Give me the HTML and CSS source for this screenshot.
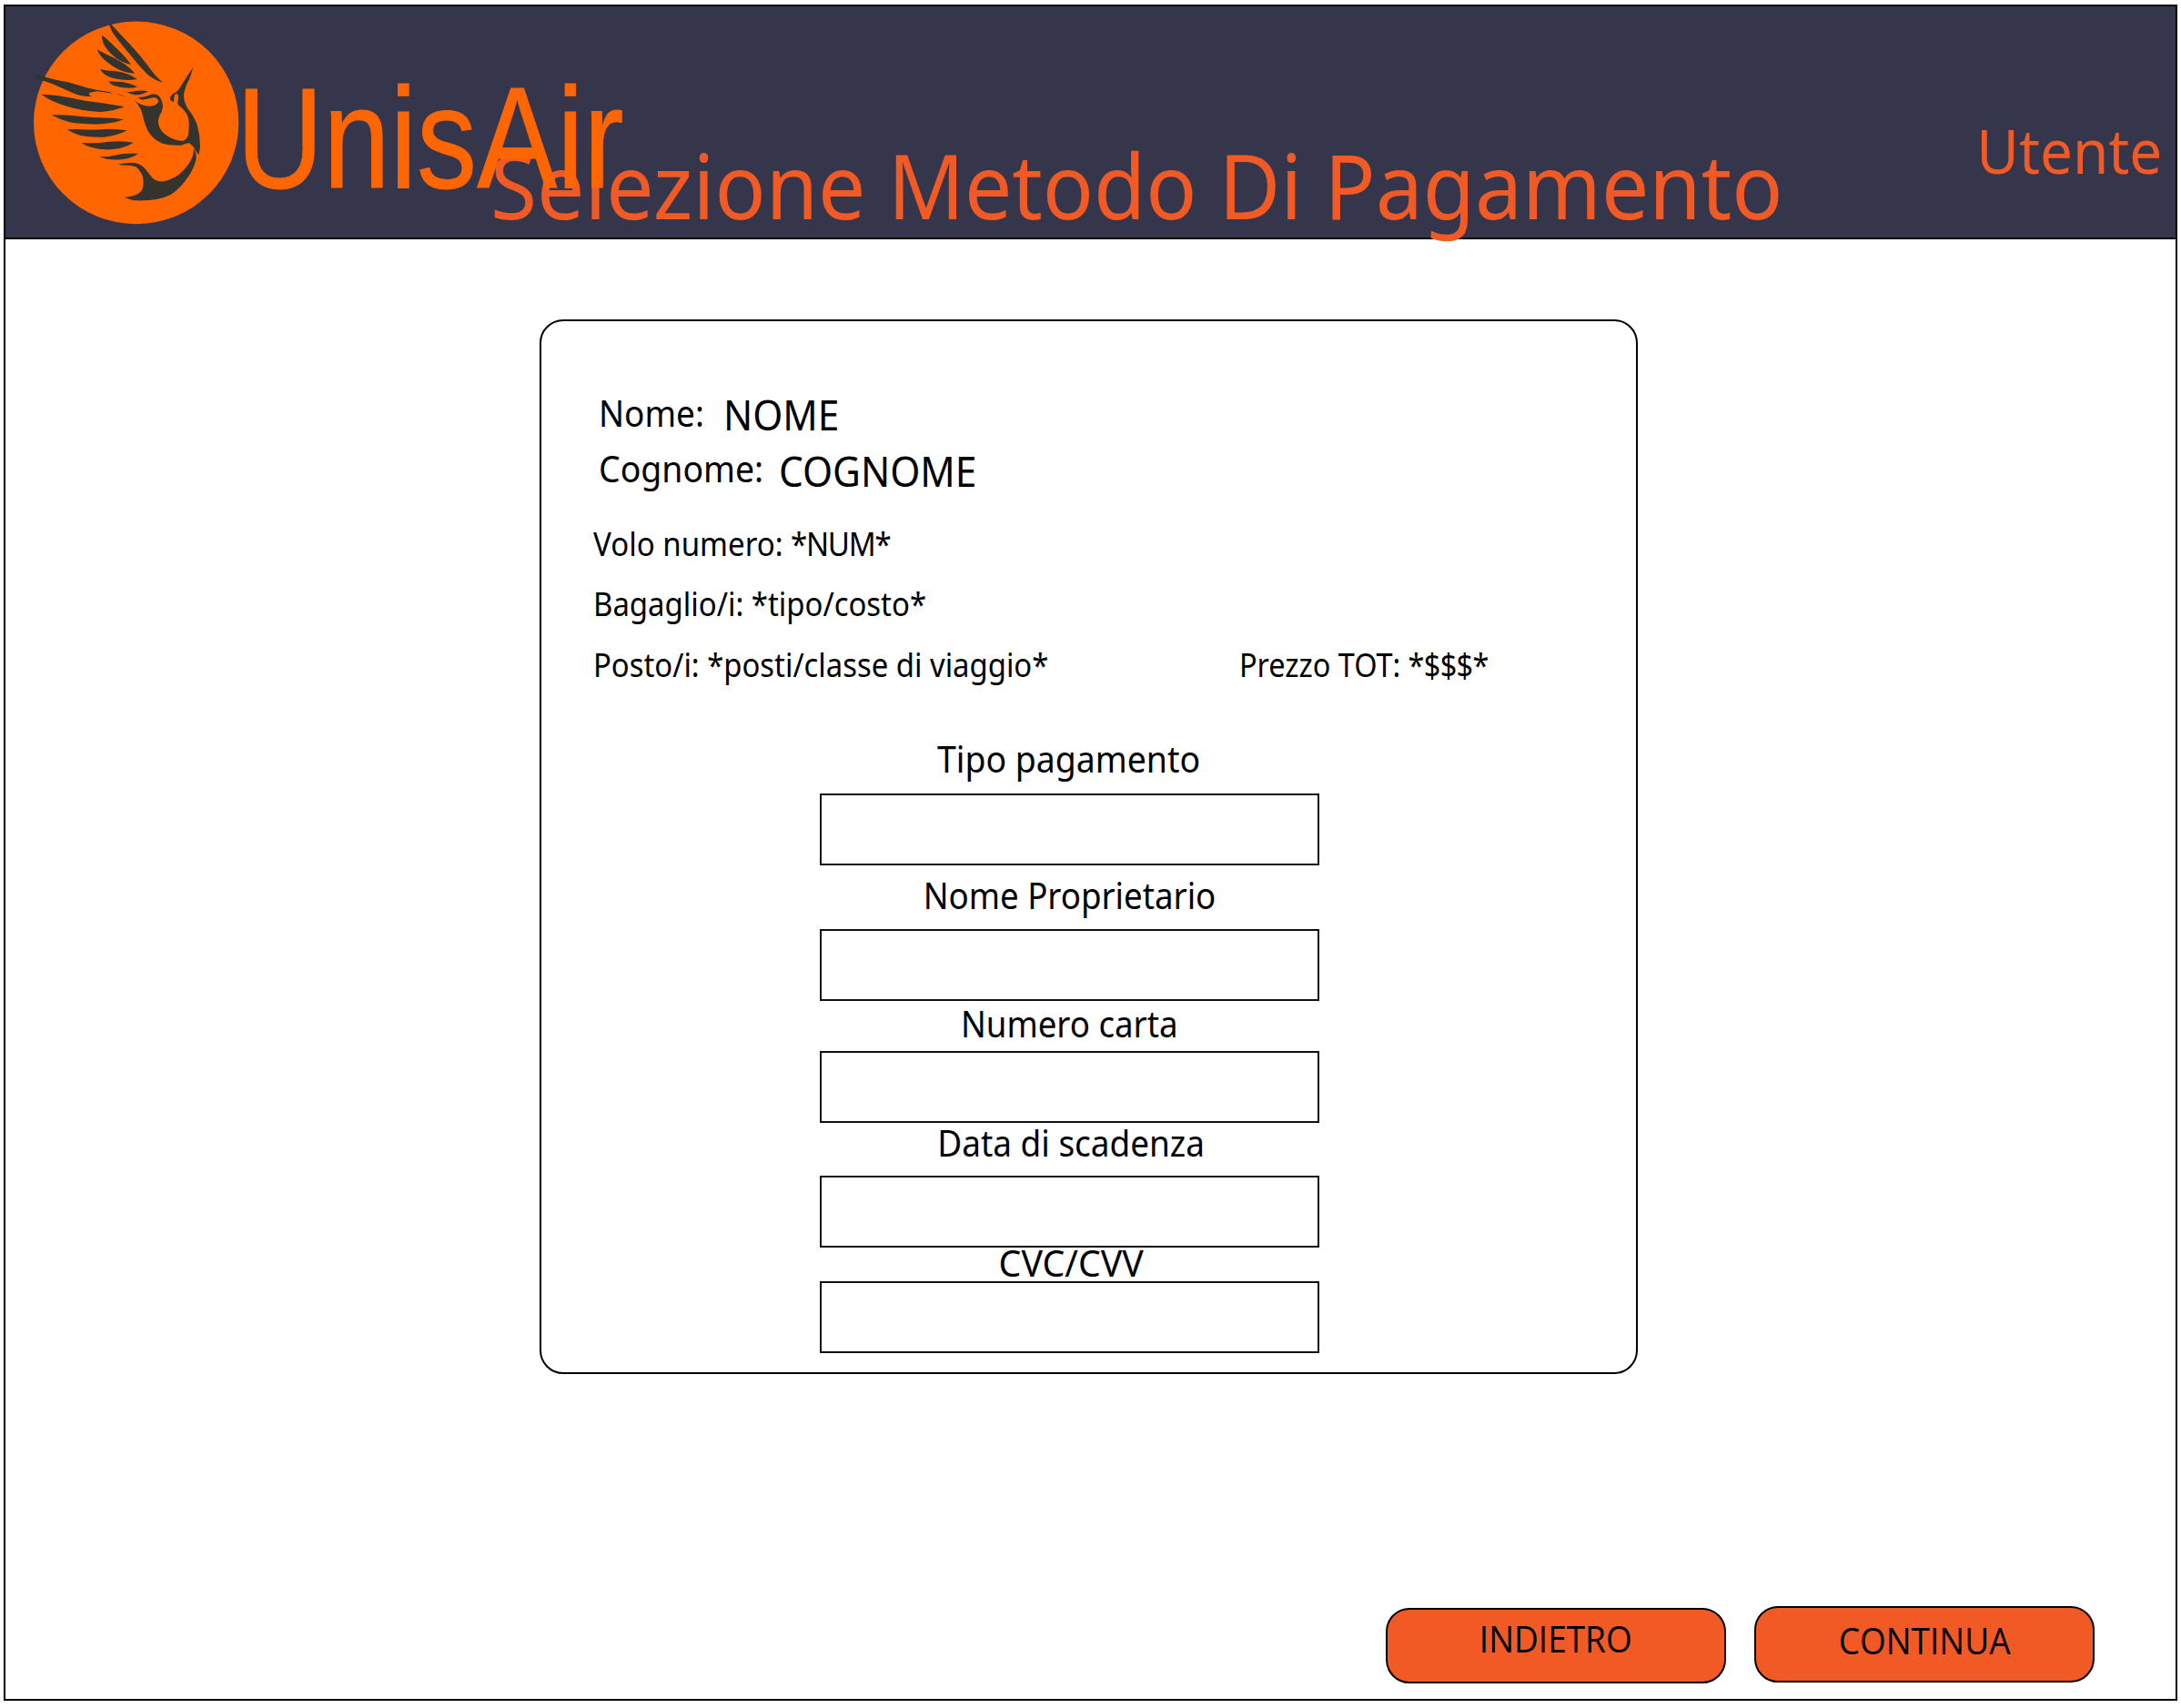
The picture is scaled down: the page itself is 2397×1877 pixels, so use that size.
FILE: index.html
```html
<!DOCTYPE html>
<html lang="it">
<head>
<meta charset="utf-8">
<title>UnisAir - Selezione Metodo Di Pagamento</title>
<link rel="stylesheet" href="styles.css">
</head>
<body>
<div class="frame">
  <header class="header">
    <svg class="logo" viewBox="105 60 690 690" aria-hidden="true">
      <ellipse cx="449" cy="404.500" rx="338" ry="334" fill="#ff6600"/>
      <g fill="#35332d">
        <path d="M357 71 L373 87 L398 114 L430 148 L462 184 L487 216 L510 246 L537 273 Q508 263 486 245 Q455 215 427 178 Q395 140 373 110 Q363 93 357 71Z"/>
        <path d="M336 117 Q347 122 360 136 Q385 160 406 181 Q420 196 432 213 Q404 208 380 190 Q350 164 341 143 Q335 130 336 117Z"/>
        <path d="M320 163 Q330 169 347 177 Q380 192 408 209 Q430 224 445 242 Q415 241 390 229 Q353 209 334 187 Q324 176 320 163Z"/>
        <path d="M329 228 Q350 234 377 234 Q400 236 424 245 Q440 252 452 261 Q425 266 394 262 Q360 257 342 243Z"/>
        <path d="M357 268 Q380 270 402 270 Q432 275 454 287 Q430 292 405 289 Q376 285 366 277Z"/>
        <path d="M416 302 Q432 304 446 300 Q466 297 489 301 Q475 310 456 313 Q434 313 416 302Z"/>
        <path d="M113 246 Q135 247 155 256 Q190 266 224 271 Q258 281 290 290 Q322 298 360 303 L374 308 L352 305 L320 301 L296 305 L293 312 L303 318 Q270 319 246 309 Q205 290 170 275 Q145 266 130 263 Q120 257 113 246Z"/>
        <path d="M378 308 Q400 311 417 319 Q397 314 378 308Z"/>
        <path d="M136 311 Q167 312 193 316 Q240 324 280 332 Q350 340 410 352 Q378 366 331 369 Q270 366 220 350 Q171 336 136 311Z"/>
        <path d="M169 379 Q210 378 240 381 Q290 387 330 388 Q370 388 407 393 Q380 406 334 409 Q270 410 230 403 Q198 395 169 379Z"/>
        <path d="M221 427 L260 426 Q300 429 340 426 Q380 424 419 430 Q387 447 345 452 Q300 454 266 447 Q240 440 221 427Z"/>
        <path d="M270 471 Q320 473 360 467 Q400 464 440 470 Q416 486 375 492 Q335 496 303 486 Q282 481 270 471Z"/>
        <path d="M326 516 Q352 518 377 512 Q412 504 456 506 Q437 521 405 525 Q360 531 326 516Z"/>
        <path d="M453 321 Q478 321 496 312 Q516 306 526 319 Q536 333 537 352 Q534 370 526 382 Q518 400 525 417 Q532 437 555 450 Q580 465 605 464 Q622 457 622 432 Q627 400 616 376 Q607 362 594 351 Q584 345 586 335 Q590 321 588 314 Q584 306 577 311 Q573 318 573 337 Q559 331 561 321 Q566 309 582 303 Q591 294 599 280 Q618 248 637 222 Q631 244 623 264 Q608 289 606 316 Q607 338 618 356 Q640 384 650 411 Q660 447 660 484 L655 511 L648 502 Q641 484 624 472 Q610 473 598 479 Q563 481 536 473 Q503 460 486 428 Q475 405 469 374 Q463 350 443 332 Q468 350 496 350 Q519 348 523 334 Q520 323 508 321 Q482 327 468 329Z"/>
        <path d="M639 490 Q647 500 647 522 Q641 554 621 582 Q596 620 563 642 Q522 661 469 661 Q440 664 409 651 Q450 647 466 630 Q476 614 471 583 Q463 562 448 550 Q425 543 405 545 L389 542 Q412 536 437 536 Q460 537 477 554 Q493 575 504 588 Q517 600 540 598 Q570 591 593 573 Q625 545 636 513Z"/>
      </g>
    </svg>
    <span class="wordmark">UnisAir</span>
    <h1 class="title">Selezione Metodo Di Pagamento</h1>
    <span class="user">Utente</span>
  </header>

  <main class="card">
    <div class="person">
      <span class="person-label first-name">Nome:</span>
      <span class="person-value">NOME</span>
    </div>
    <div class="person">
      <span class="person-label last-name">Cognome:</span>
      <span class="person-value surname">COGNOME</span>
    </div>

    <div class="details">
      <div class="detail"><span class="flight">Volo numero: <b class="flight-number">*NUM*</b></span></div>
      <div class="detail"><span class="baggage">Bagaglio/i: *tipo/costo*</span></div>
      <div class="detail"><span class="seats">Posto/i: *posti/classe di viaggio*</span><span class="price">Prezzo TOT: <b class="amount">*$$$*</b></span></div>
    </div>

    <form class="form">
      <label class="label type" for="type"><span>Tipo pagamento</span></label>
      <input class="field" id="type">
      <label class="label owner" for="owner"><span>Nome Proprietario</span></label>
      <input class="field" id="owner">
      <label class="label number" for="number"><span>Numero carta</span></label>
      <input class="field" id="number">
      <label class="label expiry" for="expiry"><span>Data di scadenza</span></label>
      <input class="field" id="expiry">
      <label class="label cvc" for="cvc"><span>CVC/CVV</span></label>
      <input class="field" id="cvc">
    </form>
  </main>

  <div class="actions">
    <button class="button back"><span>INDIETRO</span></button>
    <button class="button next"><span>CONTINUA</span></button>
  </div>
</div>
</body>
</html>
```
FILE: styles.css
```css
* {
  box-sizing: border-box;
}

body {
  margin: 0;
  width: 2397px;
  height: 1877px;
  padding: 5px 0 0 4px;
  overflow: hidden;
  background: #fff;
  color: #000;
  font-family: "Noto Sans", sans-serif;
}

span {
  display: inline-block;
  white-space: nowrap;
}

.frame {
  width: 2389px;
  height: 1864px;
  border: 2px solid #000;
}

.header {
  position: relative;
  display: flex;
  align-items: flex-start;
  height: 256px;
  border-bottom: 2px solid #000;
  background: #35354c;
  color: #f15a24;
}

.logo {
  flex: none;
  width: 230px;
  height: 230px;
  margin: 13px 0 0 29px;
}

.wordmark {
  z-index: 1;
  margin: 65px 0 0 -5px;
  color: #ff6600;
  font: 157px/160px "Liberation Sans", sans-serif;
  -webkit-text-stroke: 1px #ff6600;
  transform: scaleX(0.841);
  transform-origin: left;
}

.title {
  position: absolute;
  top: 146px;
  left: 533px;
  margin: 0;
  font-size: 98px;
  font-weight: 400;
  line-height: 101px;
  white-space: nowrap;
  transform: scaleX(0.948);
  transform-origin: left;
}

.user {
  margin: 124px 15px 0 auto;
  font-size: 67px;
  line-height: 68px;
  transform: scaleX(0.952);
  transform-origin: right;
}

.card {
  width: 1207px;
  height: 1159px;
  margin: 88px 0 0 587px;
  padding-top: 78px;
  border: 2px solid #000;
  border-radius: 26px;
}

.person {
  display: flex;
  align-items: flex-start;
  height: 61px;
  padding-left: 62.5px;
}

.person-label {
  font-size: 40px;
  line-height: 46px;
  transform-origin: left;
}

.first-name {
  width: 137px;
  transform: scaleX(0.925);
}

.last-name {
  width: 198px;
  transform: scaleX(0.935);
}

.person-value {
  font-size: 46px;
  line-height: 48px;
  transform: scaleX(0.922);
  transform-origin: left;
}

.surname {
  line-height: 50px;
}

.details {
  padding: 10.5px 0 0 56.5px;
  font-size: 36px;
}

.detail {
  display: flex;
  height: 66.5px;
  line-height: 68.5px;
}

.detail span {
  transform-origin: left;
}

.detail b {
  font-weight: 400;
}

.flight {
  transform: scaleX(0.918);
}

.flight-number {
  letter-spacing: -1.4px;
}

.baggage {
  transform: scaleX(0.914);
}

.seats {
  width: 710px;
  transform: scaleX(0.912);
}

.price {
  transform: scaleX(0.9);
}

.amount {
  letter-spacing: -0.7px;
}

.form {
  display: flex;
  flex-direction: column;
  width: 549px;
  margin-left: 306px;
}

.label {
  font-size: 40px;
  line-height: 44px;
  text-align: center;
}

.type {
  height: 109px;
  padding: 49px 2px 0 0;
}

.type span {
  transform: scaleX(0.935);
}

.owner {
  height: 70px;
  padding-top: 11px;
}

.owner span {
  transform: scaleX(0.916);
}

.number {
  height: 55px;
  padding-top: 3px;
}

.number span {
  transform: scaleX(0.916);
}

.expiry {
  height: 58px;
  padding-left: 3px;
}

.expiry span {
  transform: scaleX(0.923);
}

.cvc {
  height: 37px;
  padding-left: 3px;
  line-height: 34px;
}

.cvc span {
  transform: scaleX(0.98);
}

.field {
  width: 549px;
  height: 79px;
  padding: 0 16px;
  border: 2px solid #111;
  border-radius: 0;
  background: #fff;
  font: 36px "Noto Sans", sans-serif;
}

.actions {
  display: flex;
  align-items: flex-start;
  justify-content: flex-end;
  gap: 31px;
  margin-top: 255px;
  padding-right: 89px;
}

.button {
  display: flex;
  justify-content: center;
  width: 374px;
  height: 84px;
  padding: 0;
  border: 2px solid #000;
  border-radius: 26px;
  background: #f15a24;
  color: #000;
  font: 40px/71px "Open Sans", sans-serif;
}

.button span {
  transform: scaleX(0.925);
}

.back {
  height: 83px;
  margin-top: 2px;
  line-height: 63px;
}
```
